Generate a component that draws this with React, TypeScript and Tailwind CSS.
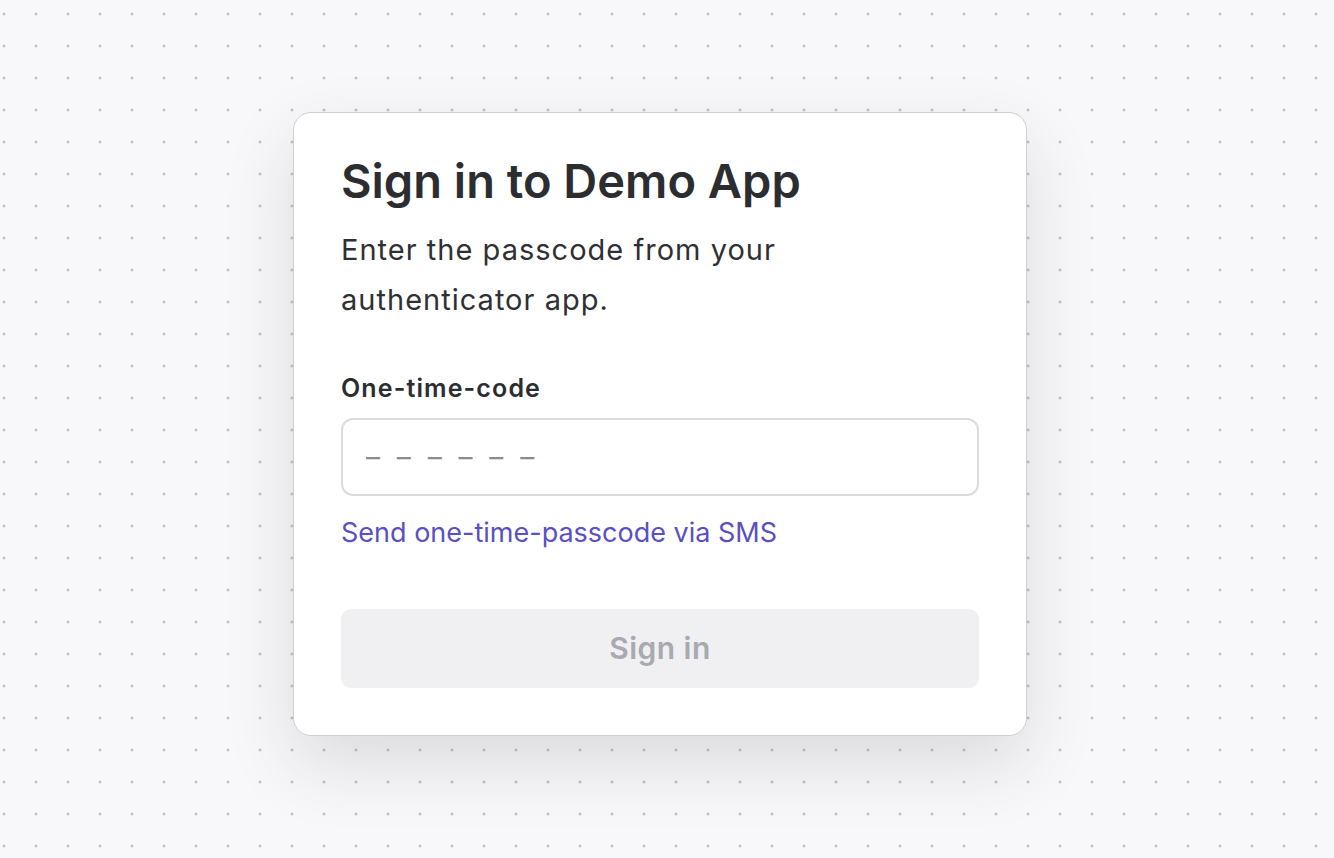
import React, { useState } from 'react';

const App: React.FC = () => {
  const [code, setCode] = useState('');

  return (
    <div
      className="min-h-[858px] w-full bg-[#f8f8fa] bg-[radial-gradient(circle,#c0c0c6_1.3px,transparent_1.7px)] bg-[size:32px_32px] bg-[position:-12px_-2px] pl-[293px] pt-[112px]"
      style={{ fontFamily: 'Inter, "Noto Sans", sans-serif' }}
    >
      {/* 카드 */}
      <div className="w-[734px] rounded-[18px] border border-[#cfcfd4] bg-white px-[47px] pt-[40px] pb-[47px] shadow-[0_28px_70px_rgba(30,30,40,0.13)]">
        <h1 className="text-[47px] font-semibold leading-[56px] tracking-[0] text-[#2b2d31]">
          Sign in to Demo App
        </h1>
        <p className="mt-[16px] max-w-[480px] text-[29px] leading-[50px] tracking-[0.035em] text-[#2f3034]">
          Enter the passcode from your authenticator app.
        </p>

        <label className="mt-[43px] block text-[25px] font-semibold leading-[40px] tracking-[0.045em] text-[#2b2d31]">
          One-time-code
        </label>
        <input
          value={code}
          onChange={(e) => setCode(e.target.value)}
          placeholder="– – – – – –"
          className="mt-[10px] h-[78px] w-full rounded-[12px] border-2 border-[#dcdce0] px-[23px] text-[28px] tracking-[0.16em] text-[#2b2d31] outline-none placeholder:text-[#8a8a90]"
        />
        <a href="#" className="mt-[17px] block text-[27px] leading-[40px] text-[#5a4fc4]">
          Send one-time-passcode via SMS
        </a>

        <button
          disabled
          className="mt-[56px] flex h-[79px] w-full items-center justify-center rounded-[10px] bg-[#f0f0f2] text-[30px] font-semibold tracking-[0.015em] text-[#a9a9b1]"
        >
          Sign in
        </button>
      </div>
    </div>
  );
};

export default App;
